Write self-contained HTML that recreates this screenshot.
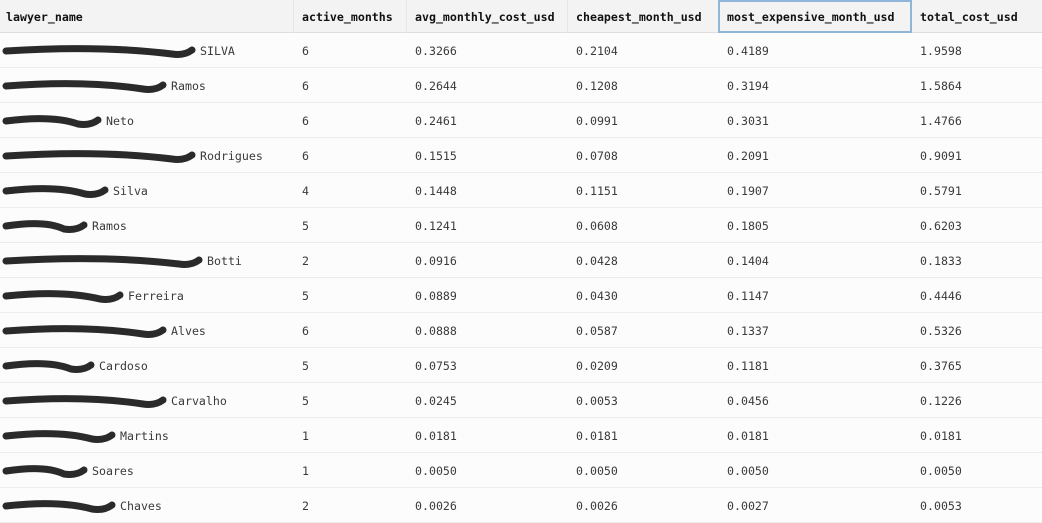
<!DOCTYPE html>
<html><head><meta charset="utf-8"><style>
*{margin:0;padding:0;box-sizing:border-box}
body{width:1042px;height:523px;overflow:hidden;background:#fff;font-family:"DejaVu Sans Mono","Liberation Mono",monospace;font-size:11.6px;color:#3a3a3a;position:relative}
.hdr{position:absolute;left:0;top:0;width:1042px;height:33px;background:#f3f3f3;border-bottom:1px solid #dedede}
.row{position:absolute;left:0;width:1042px;height:35px;border-bottom:1px solid #ececec;background:#fcfcfc}
.c{position:absolute;white-space:nowrap}
.h{font-weight:bold;color:#111;top:10px}
.vl{position:absolute;top:0;width:1px;height:523px;background:#e6e6e6}
.sel{position:absolute;left:718px;top:0;width:194px;height:33px;border:2px solid #8fb6d9}
svg{position:absolute;left:0;top:0}
.g{color:#555}
</style></head><body>
<div class="hdr"></div>
<div class="vl" style="left:293px"></div><div class="vl" style="left:406px"></div><div class="vl" style="left:567px"></div><div class="vl" style="left:718px"></div><div class="vl" style="left:911px"></div>
<div class="sel"></div>
<div class="c h" style="left:6px">lawyer_name</div>
<div class="c h" style="left:302px">active_months</div>
<div class="c h" style="left:415px">avg_monthly_cost_usd</div>
<div class="c h" style="left:576px">cheapest_month_usd</div>
<div class="c h" style="left:727px">most_expensive_month_usd</div>
<div class="c h" style="left:920px">total_cost_usd</div>
<div id="rows"></div>
<script>
var d=[["SILVA",200,6,"0.3266","0.2104","0.4189","1.9598"],["Ramos",171,6,"0.2644","0.1208","0.3194","1.5864"],["Neto",106,6,"0.2461","0.0991","0.3031","1.4766"],["Rodrigues",200,6,"0.1515","0.0708","0.2091","0.9091"],["Silva",113,4,"0.1448","0.1151","0.1907","0.5791"],["Ramos",92,5,"0.1241","0.0608","0.1805","0.6203"],["Botti",207,2,"0.0916","0.0428","0.1404","0.1833"],["Ferreira",128,5,"0.0889","0.0430","0.1147","0.4446"],["Alves",171,6,"0.0888","0.0587","0.1337","0.5326"],["Cardoso",99,5,"0.0753","0.0209","0.1181","0.3765"],["Carvalho",171,5,"0.0245","0.0053","0.0456","0.1226"],["Martins",120,1,"0.0181","0.0181","0.0181","0.0181"],["Soares",92,1,"0.0050","0.0050","0.0050","0.0050"],["Chaves",120,2,"0.0026","0.0026","0.0027","0.0053"]];
var h="",s='<svg width="1042" height="523">';
d.forEach(function(r,i){var t=33+35*i,cy=t+18,ty=t+11;
h+='<div class="row" style="top:'+t+'px"></div>';
h+='<div class="c" style="left:'+r[1]+'px;top:'+ty+'px">'+r[0]+'</div>';
h+='<div class="c" style="left:302px;top:'+ty+'px">'+r[2]+'</div>';
h+='<div class="c" style="left:415px;top:'+ty+'px">'+r[3]+'</div>';
h+='<div class="c" style="left:576px;top:'+ty+'px">'+r[4]+'</div>';
h+='<div class="c" style="left:727px;top:'+ty+'px">'+r[5]+'</div>';
h+='<div class="c" style="left:920px;top:'+ty+'px">'+r[6]+'</div>';
var e=r[1]-8,m=(e+6)/2;
s+='<path d="M6 '+(cy)+' Q'+m+' '+(cy-6)+' '+(e-20)+' '+(cy+3)+' Q'+(e-8)+' '+(cy+5)+' '+e+' '+(cy-1)+'" stroke="#2a2a2a" stroke-width="7" fill="none" stroke-linecap="round"/>';
});
s+='</svg>';
document.getElementById("rows").innerHTML=h+s;
</script>
</body></html>
